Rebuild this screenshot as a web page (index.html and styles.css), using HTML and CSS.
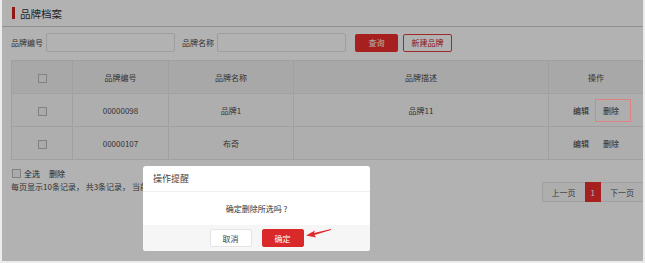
FILE: index.html
```html
<!DOCTYPE html>
<html lang="zh">
<head>
  <meta charset="UTF-8" />
  <title>品牌档案</title>
  <link rel="stylesheet" href="styles.css">
</head>
<body>
  <div class="page">
    <div class="title-bar"><span class="mark"></span>品牌档案</div>

    <div class="search">
      <label for="code">品牌编号</label>
      <input type="text" id="code" class="field" />
      <label for="name" class="gap">品牌名称</label>
      <input type="text" id="name" class="field" />
      <button class="btn btn-red">查询</button>
      <button class="btn btn-line">新建品牌</button>
    </div>

    <table class="grid">
      <colgroup>
        <col class="c1"><col class="c2"><col class="c3"><col class="c4"><col class="c5">
      </colgroup>
      <thead>
        <tr>
          <th><span class="box"></span></th>
          <th>品牌编号</th>
          <th>品牌名称</th>
          <th>品牌描述</th>
          <th>操作</th>
        </tr>
      </thead>
      <tbody>
        <tr>
          <td><span class="box"></span></td>
          <td>00000098</td>
          <td>品牌1</td>
          <td>品牌11</td>
          <td><a class="op">编辑</a><a class="op op-mark">删除</a></td>
        </tr>
        <tr>
          <td><span class="box"></span></td>
          <td>00000107</td>
          <td>布奇</td>
          <td></td>
          <td><a class="op">编辑</a><a class="op">删除</a></td>
        </tr>
      </tbody>
    </table>

    <div class="batch"><span class="box"></span>全选<a class="op">删除</a></div>

    <div class="foot">
      <span class="info">每页显示10条记录， 共3条记录， 当前第1页， 共1页</span>
      <div class="pager">
        <a>上一页</a><a class="on">1</a><a>下一页</a>
      </div>
    </div>

    <div class="mask"></div>

    <div class="dialog">
      <div class="dlg-head">操作提醒</div>
      <div class="dlg-body">确定删除所选吗 ?</div>
      <div class="dlg-foot">
        <button class="dbtn">取消</button>
        <button class="dbtn dbtn-ok">确定</button>
      </div>
    </div>

    <svg class="arrow" width="26" height="12" viewBox="0 0 26 12">
      <polygon points="0,7.5 9,2.5 8,5 25,1 25,2 8.5,7 10,9.5" fill="#e12c2c" />
    </svg>
  </div>
</body>
</html>
```

FILE: styles.css
```css
body {
  margin: 0;
  background: #ececec;
  font-family: "Noto Sans CJK SC", "Liberation Sans", sans-serif;
  font-size: 8px;
  color: #4a4a4a;
}
.page {
  position: relative;
  margin: 0 2px;
  height: 261px;
  background: #fff;
  overflow: hidden;
}
.title-bar {
  height: 27px;
  border-bottom: 1px solid #cfcfcf;
  display: flex;
  align-items: center;
  padding-left: 10px;
  font-size: 10.5px;
  color: #333;
  box-sizing: border-box;
}
.mark {
  width: 3px;
  height: 12px;
  background: #d02020;
  margin-right: 5px;
}
.search {
  display: flex;
  align-items: center;
  padding: 6px 0 0 9px;
  height: 19px;
}
.search label {
  margin-right: 3px;
}
.search .gap {
  margin-left: 7px;
}
.field {
  width: 129px;
  height: 19px;
  box-sizing: border-box;
  border: 1px solid #e2e2e2;
  border-radius: 2px;
  background: #fff;
}
.btn {
  height: 18px;
  box-sizing: border-box;
  font-family: inherit;
  font-size: 8px;
  border-radius: 2px;
  padding: 0;
}
.btn-red {
  width: 43px;
  margin-left: 9px;
  background: #ee2e2e;
  border: none;
  color: #fff;
}
.btn-line {
  width: 49px;
  margin-left: 5px;
  background: #fff;
  border: 1px solid #e04040;
  color: #d02020;
}
.grid {
  margin: 8px 0 0 9px;
  width: 632px;
  border-collapse: collapse;
  table-layout: fixed;
}
.grid th,
.grid td {
  height: 32px;
  padding: 0;
  text-align: center;
  font-weight: normal;
  border: 1px solid #e6e6e6;
}
.grid th {
  background: #f1f1f1;
}
.grid td {
  background: #fafafa;
}
.c1 { width: 61px; }
.c2 { width: 96px; }
.c3 { width: 125px; }
.c4 { width: 255px; }
.c5 { width: 95px; }
.box {
  display: inline-block;
  width: 7px;
  height: 7px;
  border: 1px solid #bbb;
  background: #f4f4f4;
  vertical-align: middle;
}
.op {
  display: inline-block;
  color: #333;
  padding: 0 7px;
}
.op-mark {
  position: relative;
}
/* annotation box, drawn above the mask */
.op-mark::after {
  content: "";
  position: absolute;
  z-index: 1;
  left: -1px;
  right: -5px;
  top: -6px;
  bottom: -6px;
  border: 1px solid #e08282;
}
.batch {
  display: flex;
  align-items: center;
  padding: 7px 0 0 10px;
  height: 12px;
  color: #333;
}
.batch .box {
  margin-right: 3px;
}
.batch .op {
  padding: 0 0 0 9px;
}
.foot {
  display: flex;
  justify-content: space-between;
  padding: 2px 0 0 9px;
}
.info {
  line-height: 12px;
}
.pager {
  display: flex;
  margin-top: 1px;
  height: 18px;
  border: 1px solid #e4e4e4;
  background: #fafafa;
  border-radius: 2px;
  margin-right: -1px;
}
.pager a {
  display: flex;
  align-items: center;
  padding: 0 9px;
  color: #555;
}
.pager .on {
  background: #ee2e2e;
  color: #fff;
  padding: 0 6px;
  margin: -1px 0;
}
.mask {
  position: absolute;
  left: 0;
  top: 0;
  right: 0;
  bottom: 0;
  background: rgba(0, 0, 0, 0.3);
}
.dialog {
  position: absolute;
  left: 141px;
  top: 166px;
  width: 227px;
  height: 85px;
  background: #fff;
  border-radius: 3px;
  overflow: hidden;
  display: flex;
  flex-direction: column;
}
.dlg-head {
  height: 26px;
  box-sizing: border-box;
  border-bottom: 1px solid #f0f0f0;
  padding-left: 10px;
  display: flex;
  align-items: center;
  font-size: 9px;
  color: #444;
}
.dlg-body {
  height: 33px;
  display: flex;
  align-items: center;
  justify-content: center;
  color: #333;
}
.dlg-foot {
  flex: 1;
  background: #f6f6f6;
  display: flex;
  justify-content: center;
  align-items: center;
  gap: 10px;
}
.dbtn {
  width: 42px;
  height: 18px;
  font-family: inherit;
  font-size: 8px;
  border: 1px solid #e4e4e4;
  border-radius: 2px;
  background: #fff;
  color: #444;
  padding: 0;
}
.dbtn-ok {
  background: #d9292b;
  border-color: #d9292b;
  color: #fff;
}
.arrow {
  position: absolute;
  left: 304px;
  top: 228px;
}
```
